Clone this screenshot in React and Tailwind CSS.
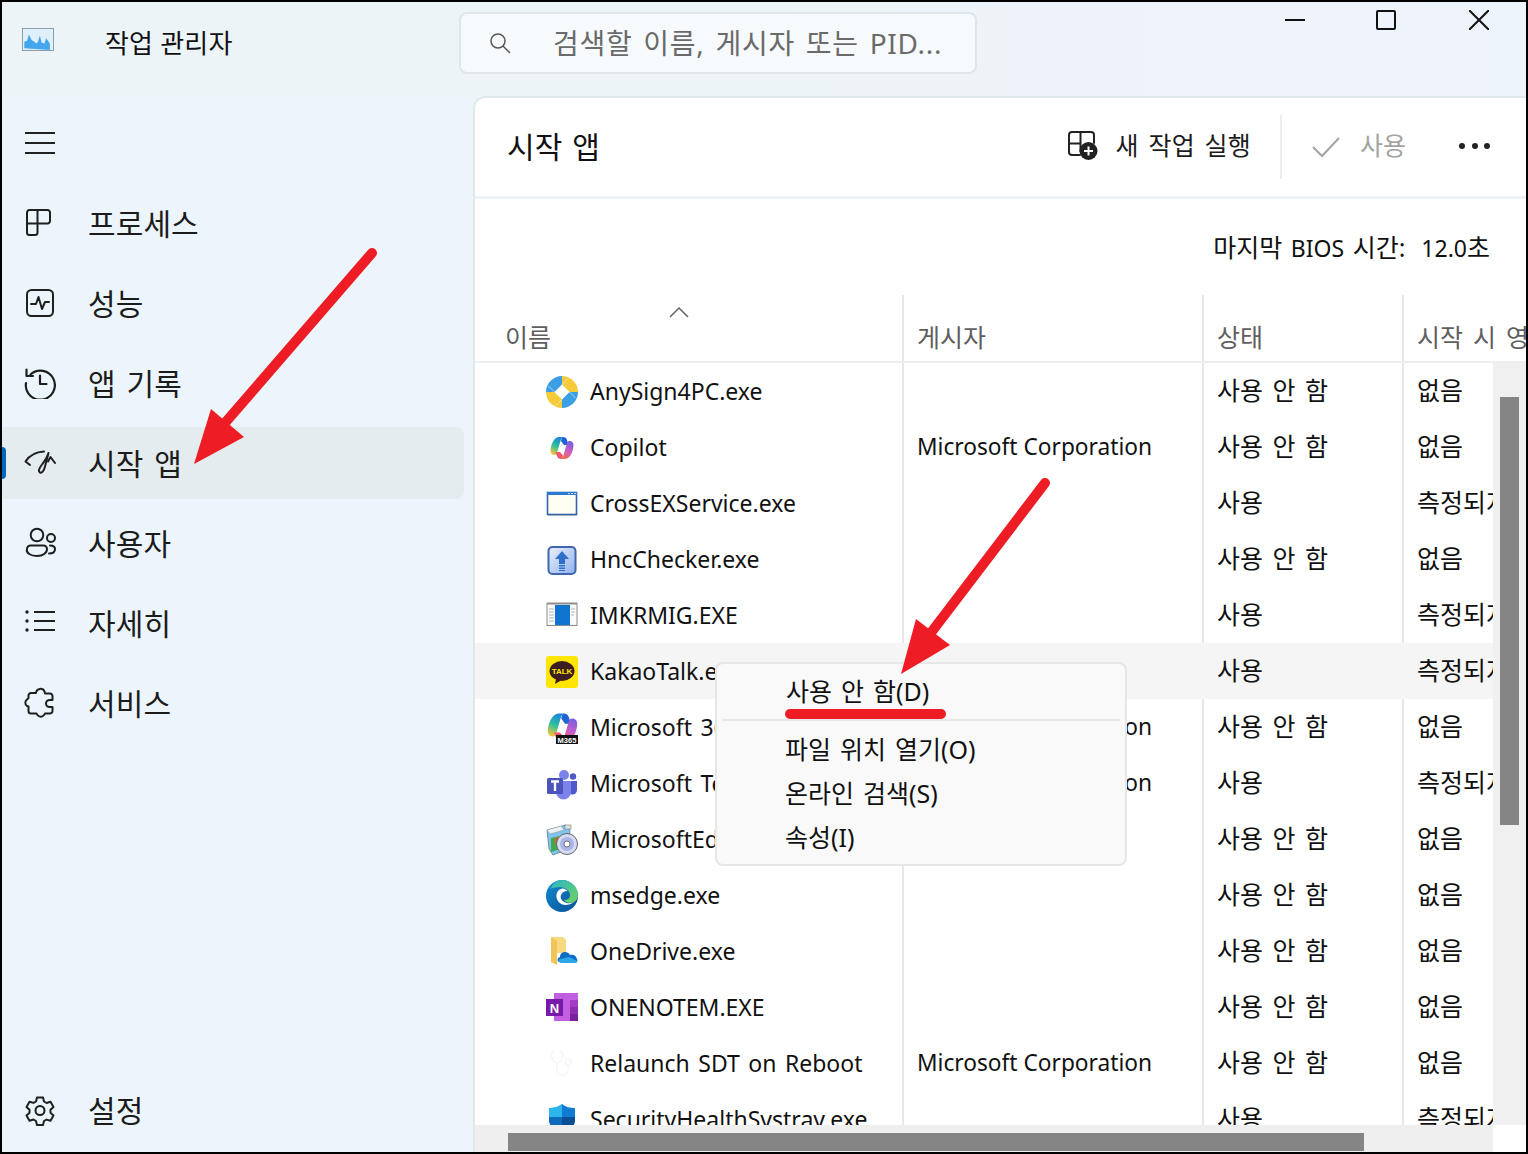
import React from "react";

const S = ({ children, size = 32, vb = "0 0 32 32", className = "", stroke = "#1f1f1f", sw = 2 }) => (
  <svg width={size} height={size} viewBox={vb} fill="none" stroke={stroke} strokeWidth={sw} strokeLinecap="round" strokeLinejoin="round" className={className}>{children}</svg>
);

const IcProcess = () => <S><path d="M14 3H5.500A2.500 2.500 0 0 0 3 5.500v20A2.500 2.500 0 0 0 5.500 28H11a2.500 2.500 0 0 0 2.500-2.500V3h10A2.500 2.500 0 0 1 26 5.500V14a2.500 2.500 0 0 1-2.500 2.500H3" /></S>;
const IcPerf = () => <S><rect x="3" y="3" width="26" height="26" rx="4.500" /><path d="M7 17h5l2.500-7 3.500 12 3-7h4" /></S>;
const IcHistory = () => <S><path d="M6.500 7.500A14.500 14.500 0 1 1 2 16" strokeWidth="2.200" /><path d="M2.500 2.500v6.500H9M16 8.500V17h6.500" strokeWidth="2.200" /></S>;
const IcStart = () => (
  <S>
    <path d="M1.500 14.500L6 18M1.500 14.500C5 9 11 5 20 4.500" />
    <path d="M24.500 6C22.500 12 20.500 14 18 17.500c-3 4-4 7-2 8 2 1 4-2 5-6L24.500 6z" />
    <path d="M24 14.500l2.500-4.500 4.500 6" />
  </S>
);
const IcUsers = () => <S><circle cx="13" cy="8" r="6.300" /><circle cx="27" cy="11" r="4" /><path d="M3 22a3.500 3.500 0 0 1 3.500-3.500h13A3.500 3.500 0 0 1 23 22c0 4-4 7-10 7S1.500 26 3 22z" /><path d="M26 18.500c3.500 0 5 1.500 5 3.500 0 3-2.500 4.500-6 4.500" /></S>;
const IcList = () => <S><circle cx="3" cy="5" r="1.700" fill="#1f1f1f" stroke="none" /><circle cx="3" cy="14" r="1.700" fill="#1f1f1f" stroke="none" /><circle cx="3" cy="23" r="1.700" fill="#1f1f1f" stroke="none" /><path d="M10 5h21M10 14h21M10 23h21" strokeLinecap="butt" /></S>;
const IcPuzzle = () => <S><path d="M12 5.500a4.500 4.500 0 0 1 8.500-1l.5 2h5a2.500 2.500 0 0 1 2.500 2.500v4h-3a3.300 3.300 0 0 0 0 7h3v4a2.500 2.500 0 0 1-2.500 2.500h-5l-1 1.500a4 4 0 0 1-6.500 0l-1-1.500H7a2.500 2.500 0 0 1-2.500-2.500v-4.500L3 19a4 4 0 0 1 0-6.500L4.500 11V8.500A2.500 2.500 0 0 1 7 6h5z" /></S>;
const IcGear = () => <S><path d="M13 3.500h6l1 4 2.500 1.500 4-1.200 3 5.200-3 2.800v3l3 2.800-3 5.200-4-1.200L20 27l-1 4h-6l-1-4-2.500-1.500-4 1.200-3-5.200 3-2.800v-3l-3-2.800 3-5.200 4 1.200L12 7.500z" /><circle cx="16" cy="16.500" r="4.500" /></S>;

const AnySign = () => (
  <svg width="32" height="32" viewBox="0 0 32 32">
    <path d="M16 16V0A16 16 0 0 0 0 16z" fill="#3c9fe6" />
    <path d="M16 16V0A16 16 0 0 1 32 16z" fill="#f5cb3c" />
    <path d="M16 16V32A16 16 0 0 1 0 16z" fill="#f5cb3c" />
    <path d="M16 16V32A16 16 0 0 0 32 16z" fill="#3c9fe6" />
    <path d="M16 8.500l7.500 7.500-7.500 7.500L8.500 16z" fill="#fff" />
    <path d="M16 8.500L22 2.500M23.500 16l6 6M16 23.500L10 29.500M8.500 16l-6-6" stroke="#fff" strokeWidth="0.800" opacity=".7" />
  </svg>
);
const CopilotShape = ({ p }) => (
  <>
    <defs>
      <linearGradient id={`${p}a`} x1="0.700" y1="0" x2="0.300" y2="1"><stop offset="0" stopColor="#1b7fe0" /><stop offset=".55" stopColor="#2fc09a" /><stop offset="1" stopColor="#f2c53a" /></linearGradient>
      <linearGradient id={`${p}b`} x1="0.700" y1="0" x2="0.300" y2="1"><stop offset="0" stopColor="#7a5fe0" /><stop offset=".55" stopColor="#d05cc4" /><stop offset="1" stopColor="#f5703c" /></linearGradient>
    </defs>
    <path d="M13 5h5c-2 0-3 2-3.500 4L11 21c-.5 1.500-1.500 2-3 2-2 0-3.500-2-3.500-4 0-5 3-14 8.500-14z" fill={`url(#${p}a)`} />
    <path d="M17 5c2 0 3.500 1 4 3l1.500 5h-4.500L15 9c.5-2 1-4 2-4z" fill="#1f62d6" />
    <path d="M19 27h-5c2 0 3-2 3.500-4L21 11c.5-1.500 1.500-2 3-2 2 0 3.500 2 3.500 4 0 5-3 14-8.500 14z" fill={`url(#${p}b)`} />
    <path d="M15 27c-2 0-3.500-1-4-3l-1.500-4h4.500l3 3.500c-.5 2-1 3.500-2 3.500z" fill="#f0566e" />
  </>
);
const Copilot = () => <svg width="32" height="32" viewBox="0 0 32 32"><CopilotShape p="cp" /></svg>;
const CrossEx = () => (
  <svg width="32" height="32" viewBox="0 0 32 32">
    <rect x="1.500" y="4.500" width="29" height="22" fill="#fffef2" stroke="#2f63ad" strokeWidth="1.600" />
    <rect x="1" y="4" width="30" height="3" fill="#2a7ad4" />
    <rect x="22" y="5" width="2" height="1" fill="#bcd8f2" /><rect x="25" y="5" width="2" height="1" fill="#bcd8f2" /><rect x="28" y="5" width="2" height="1" fill="#bcd8f2" />
    <rect x="2" y="27" width="29" height="1" fill="#8a8a8a" opacity=".5" />
  </svg>
);
const Hnc = () => (
  <svg width="32" height="32" viewBox="0 0 32 32">
    <defs><linearGradient id="hnc" x1="0" y1="0" x2="1" y2="1"><stop offset="0" stopColor="#eaf1fd" /><stop offset="1" stopColor="#8fb0ee" /></linearGradient></defs>
    <rect x="2.500" y="3" width="27" height="27" rx="4" fill="url(#hnc)" stroke="#3f66ae" strokeWidth="2" />
    <path d="M16 7l-7 8h4v5h6v-5h4z" fill="#2f70c9" />
    <path d="M13 21h6v1.500h-6zM13 23.500h6V25h-6zM13 26h6v1h-6z" fill="#2f70c9" />
  </svg>
);
const Imk = () => (
  <svg width="32" height="32" viewBox="0 0 32 32">
    <rect x="1" y="3.500" width="30" height="22" fill="#fbfbfb" stroke="#8c8c8c" strokeWidth="1" />
    <rect x="1" y="2.500" width="30" height="2" fill="#8d8d8d" />
    <path d="M3 9h5M3 12h5M3 15h5M3 18h5M3 21h5M25 9h4M25 12h4M25 15h3" stroke="#b5b5b5" strokeWidth="1" />
    <rect x="9" y="5" width="15" height="20" fill="#0f74cf" />
  </svg>
);
const Kakao = () => (
  <svg width="32" height="32" viewBox="0 0 32 32">
    <rect width="32" height="32" rx="3" fill="#ffe600" />
    <ellipse cx="16" cy="15" rx="12.500" ry="10" fill="#3c1e1e" />
    <path d="M10 23l-1 5 6-3.500z" fill="#3c1e1e" />
    <text x="16" y="18" textAnchor="middle" fontSize="8" fontWeight="700" fill="#ffe600" fontFamily="'Liberation Sans',sans-serif">TALK</text>
  </svg>
);
const M365 = () => (
  <svg width="32" height="32" viewBox="0 0 32 32">
    <g transform="translate(-4 -5) scale(1.280)"><CopilotShape p="m3" /></g>
    <rect x="10" y="23" width="22" height="9" fill="#111" />
    <text x="21" y="30.500" textAnchor="middle" fontSize="7.500" fontWeight="700" fill="#fff" fontFamily="'Liberation Sans',sans-serif">M365</text>
  </svg>
);
const Teams = () => (
  <svg width="32" height="32" viewBox="0 0 32 32">
    <circle cx="18" cy="7" r="5" fill="#7b83eb" />
    <circle cx="27" cy="8.500" r="3.200" fill="#5059c9" />
    <path d="M22 13h9v9a4.500 4.500 0 0 1-9 0z" fill="#5059c9" />
    <path d="M10 13h15v11a7.500 7.500 0 0 1-15 0z" fill="#7b83eb" />
    <rect x="1" y="10" width="16" height="16" rx="1.500" fill="#4b53bc" />
    <path d="M5 13.500h8M9 13.500V23" stroke="#fff" strokeWidth="2.400" fill="none" />
  </svg>
);
const EdgeUp = () => (
  <svg width="32" height="32" viewBox="0 0 32 32">
    <path d="M1 6L20 1l4 5-2 19-15 6-4-6z" fill="#7fc4ec" stroke="#5b7f96" strokeWidth=".8" />
    <path d="M1 6l14-4 3 4-14 4z" fill="#f0f0f0" stroke="#7a9aaa" strokeWidth=".5" />
    <path d="M5 14l9-2v13l-9 3z" fill="#3fa94f" />
    <path d="M9 14l5-1v6l-5 1z" fill="#dc5b34" />
    <rect x="19" y="1" width="6" height="4" fill="#e2e2e2" stroke="#666" strokeWidth=".5" />
    <circle cx="21" cy="20" r="10.500" fill="#d6dcf2" stroke="#666" strokeWidth="1" />
    <circle cx="21" cy="20" r="7" fill="#aab4e6" />
    <circle cx="21" cy="20" r="3" fill="#fff" stroke="#777" strokeWidth="1" />
  </svg>
);
const Edge = () => (
  <svg width="32" height="32" viewBox="0 0 32 32">
    <defs>
      <linearGradient id="eda" x1="0" y1="0" x2="1" y2="1"><stop offset="0" stopColor="#2bb5c8" /><stop offset="1" stopColor="#6fd35c" /></linearGradient>
      <linearGradient id="edb" x1="0" y1="0" x2="1" y2="1"><stop offset="0" stopColor="#0f8ad0" /><stop offset="1" stopColor="#0b4f97" /></linearGradient>
    </defs>
    <circle cx="16" cy="16" r="16" fill="url(#edb)" />
    <path d="M4 9C7 3 11 0 16 0c9 0 16 7 16 15 0 5-4 8-8 8-3 0-5-1-6-3 5 0 6-3 6-5 0-4-5-8-10-8C10 7 6 8 4 9z" fill="url(#eda)" />
    <path d="M15 9c-3 1-5 4-4.500 8 .5 5 5 8 9 8 3 0 6-1 8.500-3-4 2-8 1.500-10.500-.5-3-2-3.500-5-2-7.500 1-2 3-3 6-3-2-2-4-3-6.500-2z" fill="#fff" />
  </svg>
);
const OneDriveIc = () => (
  <svg width="32" height="32" viewBox="0 0 32 32">
    <path d="M5 1h12l3 3v13H11l-6 10z" fill="#f7d980" />
    <path d="M5 1l6 4v24l-6-3z" fill="#f0c456" />
    <path d="M13 26c-2-1-2-4 1-5 0-5 7-7 10-2 3-1 6 0 7 4 1 2 0 3-1 3z" fill="#0e6dc4" />
    <path d="M15 27c-2 0-3-3-1-4l9-2 8 4c0 1 0 2-1 2z" fill="#2ca8ea" />
  </svg>
);
const OneNote = () => (
  <svg width="32" height="32" viewBox="0 0 32 32">
    <rect x="8" y="1" width="24" height="28" fill="#c15fe0" />
    <rect x="24" y="8" width="8" height="7" fill="#a43cc5" />
    <rect x="24" y="15" width="8" height="7" fill="#8f2eb1" />
    <rect x="24" y="22" width="8" height="7" fill="#7b209c" />
    <rect x="0" y="7" width="17" height="17" fill="#7719aa" />
    <text x="8.500" y="20.500" textAnchor="middle" fontSize="13" fontWeight="700" fill="#fff" fontFamily="'Liberation Sans',sans-serif">N</text>
  </svg>
);
const Steth = () => (
  <svg width="32" height="32" viewBox="0 0 32 32" fill="none" stroke="#f6f6f6" strokeWidth="1.500">
    <path d="M8 3c-3 1-3 4-2 7 1 3 3 5 5 5s4-2 5-5c1-3 1-6-2-7M11 15v8c0 5 10 6 11 0v-6" />
    <circle cx="22" cy="14" r="3" />
  </svg>
);
const Shield = () => (
  <svg width="32" height="32" viewBox="0 0 32 32">
    <path d="M16 0c4 3 8 4 12 4 1 0 1 0 1 1v11c0 6-6 11-13 14C9 27 3 22 3 16V5c0-1 0-1 1-1 4 0 8-1 12-4z" fill="#0f7bd2" />
    <path d="M16 0c-4 3-8 4-12 4-1 0-1 0-1 1v8h13z" fill="#2fb5ee" />
    <path d="M3 13h13v17C9 27 3 22 3 16z" fill="#0f6cbd" />
    <path d="M16 13h13v3c0 6-6 11-13 14z" fill="#0a4f95" />
  </svg>
);

const rows = [
  ["AnySign4PC.exe", "", "사용 안 함", "없음", <AnySign />],
  ["Copilot", "Microsoft Corporation", "사용 안 함", "없음", <Copilot />],
  ["CrossEXService.exe", "", "사용", "측정되지 않음", <CrossEx />],
  ["HncChecker.exe", "", "사용 안 함", "없음", <Hnc />],
  ["IMKRMIG.EXE", "", "사용", "측정되지 않음", <Imk />],
  ["KakaoTalk.exe", "", "사용", "측정되지 않음", <Kakao />],
  ["Microsoft 365 Copilot", "Microsoft Corporation", "사용 안 함", "없음", <M365 />],
  ["Microsoft Teams", "Microsoft Corporation", "사용", "측정되지 않음", <Teams />],
  ["MicrosoftEdgeUpdate.exe", "", "사용 안 함", "없음", <EdgeUp />],
  ["msedge.exe", "", "사용 안 함", "없음", <Edge />],
  ["OneDrive.exe", "", "사용 안 함", "없음", <OneDriveIc />],
  ["ONENOTEM.EXE", "", "사용 안 함", "없음", <OneNote />],
  ["Relaunch SDT on Reboot", "Microsoft Corporation", "사용 안 함", "없음", <Steth />],
  ["SecurityHealthSystray.exe", "", "사용", "측정되지 않음", <Shield />],
];

const nav = [
  ["프로세스", <IcProcess />],
  ["성능", <IcPerf />],
  ["앱 기록", <IcHistory />],
  ["시작 앱", <IcStart />, true],
  ["사용자", <IcUsers />],
  ["자세히", <IcList />],
  ["서비스", <IcPuzzle />],
];

function NavItem({ label, icon, active }) {
  return (
    <div className={`relative my-1 mr-[9px] flex h-[72px] items-center rounded-r-lg ${active ? "bg-[#e4ecef]" : ""}`}>
      {active && <span className="absolute left-0 top-[20px] h-[32px] w-[4px] rounded-r bg-[#0067c0]" />}
      <span className="flex w-[76px] justify-center">{icon}</span>
      <span className="ml-[10px] pt-[1px] text-[30px] leading-none tracking-[0.1px] [word-spacing:3px] text-[#1c1c1c]">{label}</span>
    </div>
  );
}

export default function App() {
  return (
    <div className="relative flex h-[1154px] w-[1528px] flex-col overflow-hidden border-2 border-black bg-[#ecf5fb] font-['Noto_Sans','Noto_Sans_CJK_KR',sans-serif] text-black">
      {/* Title bar */}
      <header className="flex h-[94px] shrink-0 items-start bg-linear-to-r from-[#edf4f8] via-[#edf4f8] to-[#eef4fb]">
        <div className="mt-[26px] ml-[20px] h-[23px] w-[32px] shrink-0 border border-[#8d9db0] bg-[#dff0fb]">
          <svg viewBox="0 0 32 23" className="h-full w-full"><path d="M1 21V14l3-1 2-7 3 6 3 2 2 2 2-2 2-7 2 8 3 1 2-6 4 6v7z" fill="#43a6ef" /></svg>
        </div>
        <span className="mt-[22px] ml-[51px] w-[354px] shrink-0 text-[26px] leading-[38px] tracking-[0.2px] text-[#111]">작업 관리자</span>
        <div className="mt-[10px] flex h-[62px] w-[518px] shrink-0 items-center rounded-lg border-2 border-[#dfe5e9] bg-[#f7fafc] pl-[28px]">
          <svg width="22" height="22" viewBox="0 0 22 22" fill="none" stroke="#555" strokeWidth="1.500"><circle cx="9" cy="9" r="7" /><path d="M14 14l7 7" /></svg>
          <span className="ml-[42px] whitespace-nowrap text-[28px] leading-none tracking-[0.7px] [word-spacing:3px] text-[#6a6a6a]">검색할 이름, 게시자 또는 PID...</span>
        </div>
        <div className="flex h-[36px] shrink-0 items-center">
          <span className="ml-[308px] h-[2px] w-[20px] shrink-0 bg-[#111]" />
          <span className="ml-[71px] h-[20px] w-[20px] shrink-0 rounded-[2px] border-2 border-[#111]" />
          <svg width="20" height="20" viewBox="0 0 20 20" className="ml-[73px] shrink-0" stroke="#111" strokeWidth="2"><path d="M0 0l20 20M20 0L0 20" /></svg>
        </div>
      </header>

      <div className="flex min-h-0 flex-1">
        {/* Sidebar */}
        <aside className="flex w-[471px] shrink-0 flex-col bg-[#ecf5fb]">
          <div className="mt-[7px] flex h-[80px] w-[76px] flex-col items-center justify-center gap-[8px]">
            <span className="block h-[2px] w-[30px] bg-[#222]" />
            <span className="block h-[2px] w-[30px] bg-[#222]" />
            <span className="block h-[2px] w-[30px] bg-[#222]" />
          </div>
          {nav.map(([l, ic, a]) => <NavItem key={l} label={l} icon={ic} active={a} />)}
          <div className="mt-auto mb-[2px]"><NavItem label="설정" icon={<IcGear />} /></div>
        </aside>

        {/* Main */}
        <main className="flex min-w-0 flex-1 flex-col overflow-hidden rounded-tl-xl border-l-2 border-t-2 border-[#e1e8ec] bg-white">
          <div className="flex h-[101px] shrink-0 items-center border-b-[3px] border-[#eff2f4] pl-[32px]">
            <h1 className="text-[30px] font-normal leading-none tracking-[0.1px] [word-spacing:2px] text-[#111]">시작 앱</h1>
            <div className="ml-auto flex items-center">
              <svg width="30" height="29" viewBox="0 0 30 29" fill="none" stroke="#222" strokeWidth="2" className="mr-[18px] -mt-[3px]">
                <path d="M12.500 1H4a3 3 0 0 0-3 3v17a3 3 0 0 0 3 3h8M1 12.500h11.500V1H23a3 3 0 0 1 3 3v8M12.500 12.500v8" strokeLinecap="round" />
                <circle cx="20.500" cy="20" r="9" fill="#222" stroke="none" />
                <path d="M20.500 15.500v9M16 20h9" stroke="#fff" strokeWidth="2" />
              </svg>
              <span className="-mt-[3px] text-[25px] leading-none tracking-[0.2px] [word-spacing:3px] text-[#1c1c1c]">새 작업 실행</span>
              <span className="ml-[29px] h-[64px] w-[2px] bg-[#eceff1]" />
              <svg width="28" height="22" viewBox="0 0 28 22" fill="none" stroke="#a3a3a3" strokeWidth="2" className="ml-[30px]"><path d="M1 11l9 9L27 2" /></svg>
              <span className="-mt-[3px] ml-[20px] text-[25px] leading-none text-[#a3a3a3]">사용</span>
              <span className="-mt-[3px] ml-[53px] mr-[36px] flex gap-[6.500px]">
                <i className="block h-[6px] w-[6px] rounded-full bg-[#222]" />
                <i className="block h-[6px] w-[6px] rounded-full bg-[#222]" />
                <i className="block h-[6px] w-[6px] rounded-full bg-[#222]" />
              </span>
            </div>
          </div>

          <div className="flex h-[96px] shrink-0 items-center justify-end pr-[36px] text-[25px] leading-none text-[#111]">
            <span className="[word-spacing:2px]">마지막 <span className="text-[23px]">BIOS</span> 시간:</span>
            <span className="ml-[16px]"><span className="text-[23px]">12.0</span>초</span>
          </div>

          <div className="grid h-[68px] shrink-0 grid-cols-[427px_300px_200px_1fr] overflow-hidden border-b-2 border-[#eceff1] text-[25px] leading-none text-[#5f5f5f]">
            <div className="relative flex items-end pb-[11px] pl-[30px]">
              <span>이름</span>
              <svg width="20" height="11" viewBox="0 0 20 11" fill="none" stroke="#666" strokeWidth="1.500" className="absolute left-[194px] top-[12px]"><path d="M1 10l9-9 9 9" /></svg>
            </div>
            <div className="flex items-end border-l-2 border-[#e8e8e8] pb-[11px] pl-[13px]">게시자</div>
            <div className="flex items-end border-l-2 border-[#e8e8e8] pb-[11px] pl-[13px]">상태</div>
            <div className="flex items-end whitespace-nowrap border-l-2 border-[#e8e8e8] pb-[11px] pl-[13px] [word-spacing:3.500px]">시작 시 영향</div>
          </div>

          <div className="flex min-h-0 flex-1">
            <div className="min-w-0 flex-1 overflow-hidden">
              {rows.map(([name, pub, st, imp, ic], i) => (
                <div key={name} className={`grid h-[56px] grid-cols-[427px_300px_200px_1fr] leading-none text-[#111] ${i === 5 ? "bg-[#f5f5f5]" : ""}`}>
                  <div className="flex items-center overflow-hidden whitespace-nowrap pl-[71px] pt-[1px] text-[23px] [word-spacing:2.500px]">
                    <span className="flex h-[32px] w-[32px] shrink-0">{ic}</span>
                    <span className="ml-[12px]">{name}</span>
                  </div>
                  <div className={`flex items-center whitespace-nowrap border-l-2 pl-[13px] text-[22.700px] ${i === 5 ? "border-transparent" : "border-[#e8e8e8]"}`}>{pub}</div>
                  <div className={`flex items-center whitespace-nowrap border-l-2 pb-[2px] pl-[13px] text-[25px] [word-spacing:3px] ${i === 5 ? "border-transparent" : "border-[#e8e8e8]"}`}>{st}</div>
                  <div className={`flex items-center overflow-hidden whitespace-nowrap border-l-2 pb-[2px] pl-[13px] text-[25px] ${i === 5 ? "border-transparent" : "border-[#e8e8e8]"}`}>{imp}</div>
                </div>
              ))}
            </div>
            <div className="w-[33px] shrink-0 bg-[#f0f0f0] pt-[34px] pl-[7px]">
              <div className="h-[428px] w-[19px] bg-[#858585]" />
            </div>
          </div>

          <div className="flex h-[27px] shrink-0">
            <div className="flex-1 bg-[#efefef] pt-[8px] pl-[33px]">
              <div className="h-[18px] w-[856px] bg-[#858585]" />
            </div>
            <div className="w-[33px] bg-white" />
          </div>
        </main>
      </div>

      {/* Context menu */}
      <div className="absolute left-[713px] top-[660px] h-[204px] w-[412px] rounded-lg border-2 border-[#e6e6e6] bg-[#f9f9f9] text-[25px] leading-none [word-spacing:2.500px] text-[#111]">
        <div className="flex h-[55px] items-center pl-[69px]">사용 안 함(D)</div>
        <div className="mx-[5px] h-[2px] bg-[#e8e8e8]" />
        <div className="pt-[6px]">
          <div className="flex h-[44px] items-center pl-[68px]">파일 위치 열기(O)</div>
          <div className="flex h-[44px] items-center pl-[68px]">온라인 검색(S)</div>
          <div className="flex h-[44px] items-center pl-[68px]">속성(I)</div>
        </div>
      </div>

      {/* Red annotations */}
      <span className="absolute left-[783px] top-[707px] h-[10px] w-[161px] rounded-full bg-[#ee1c25]" />
      <svg className="pointer-events-none absolute -left-[2px] -top-[2px]" width="1528" height="1154" viewBox="0 0 1528 1154">
        <path d="M372 253L224 424" stroke="#ee1c25" strokeWidth="10" strokeLinecap="round" fill="none" />
        <path d="M194 464L211 409L244 437Z" fill="#ee1c25" />
        <path d="M1045 483L930 634" stroke="#ee1c25" strokeWidth="10" strokeLinecap="round" fill="none" />
        <path d="M901 674L916 619L950 645Z" fill="#ee1c25" />
      </svg>
    </div>
  );
}
